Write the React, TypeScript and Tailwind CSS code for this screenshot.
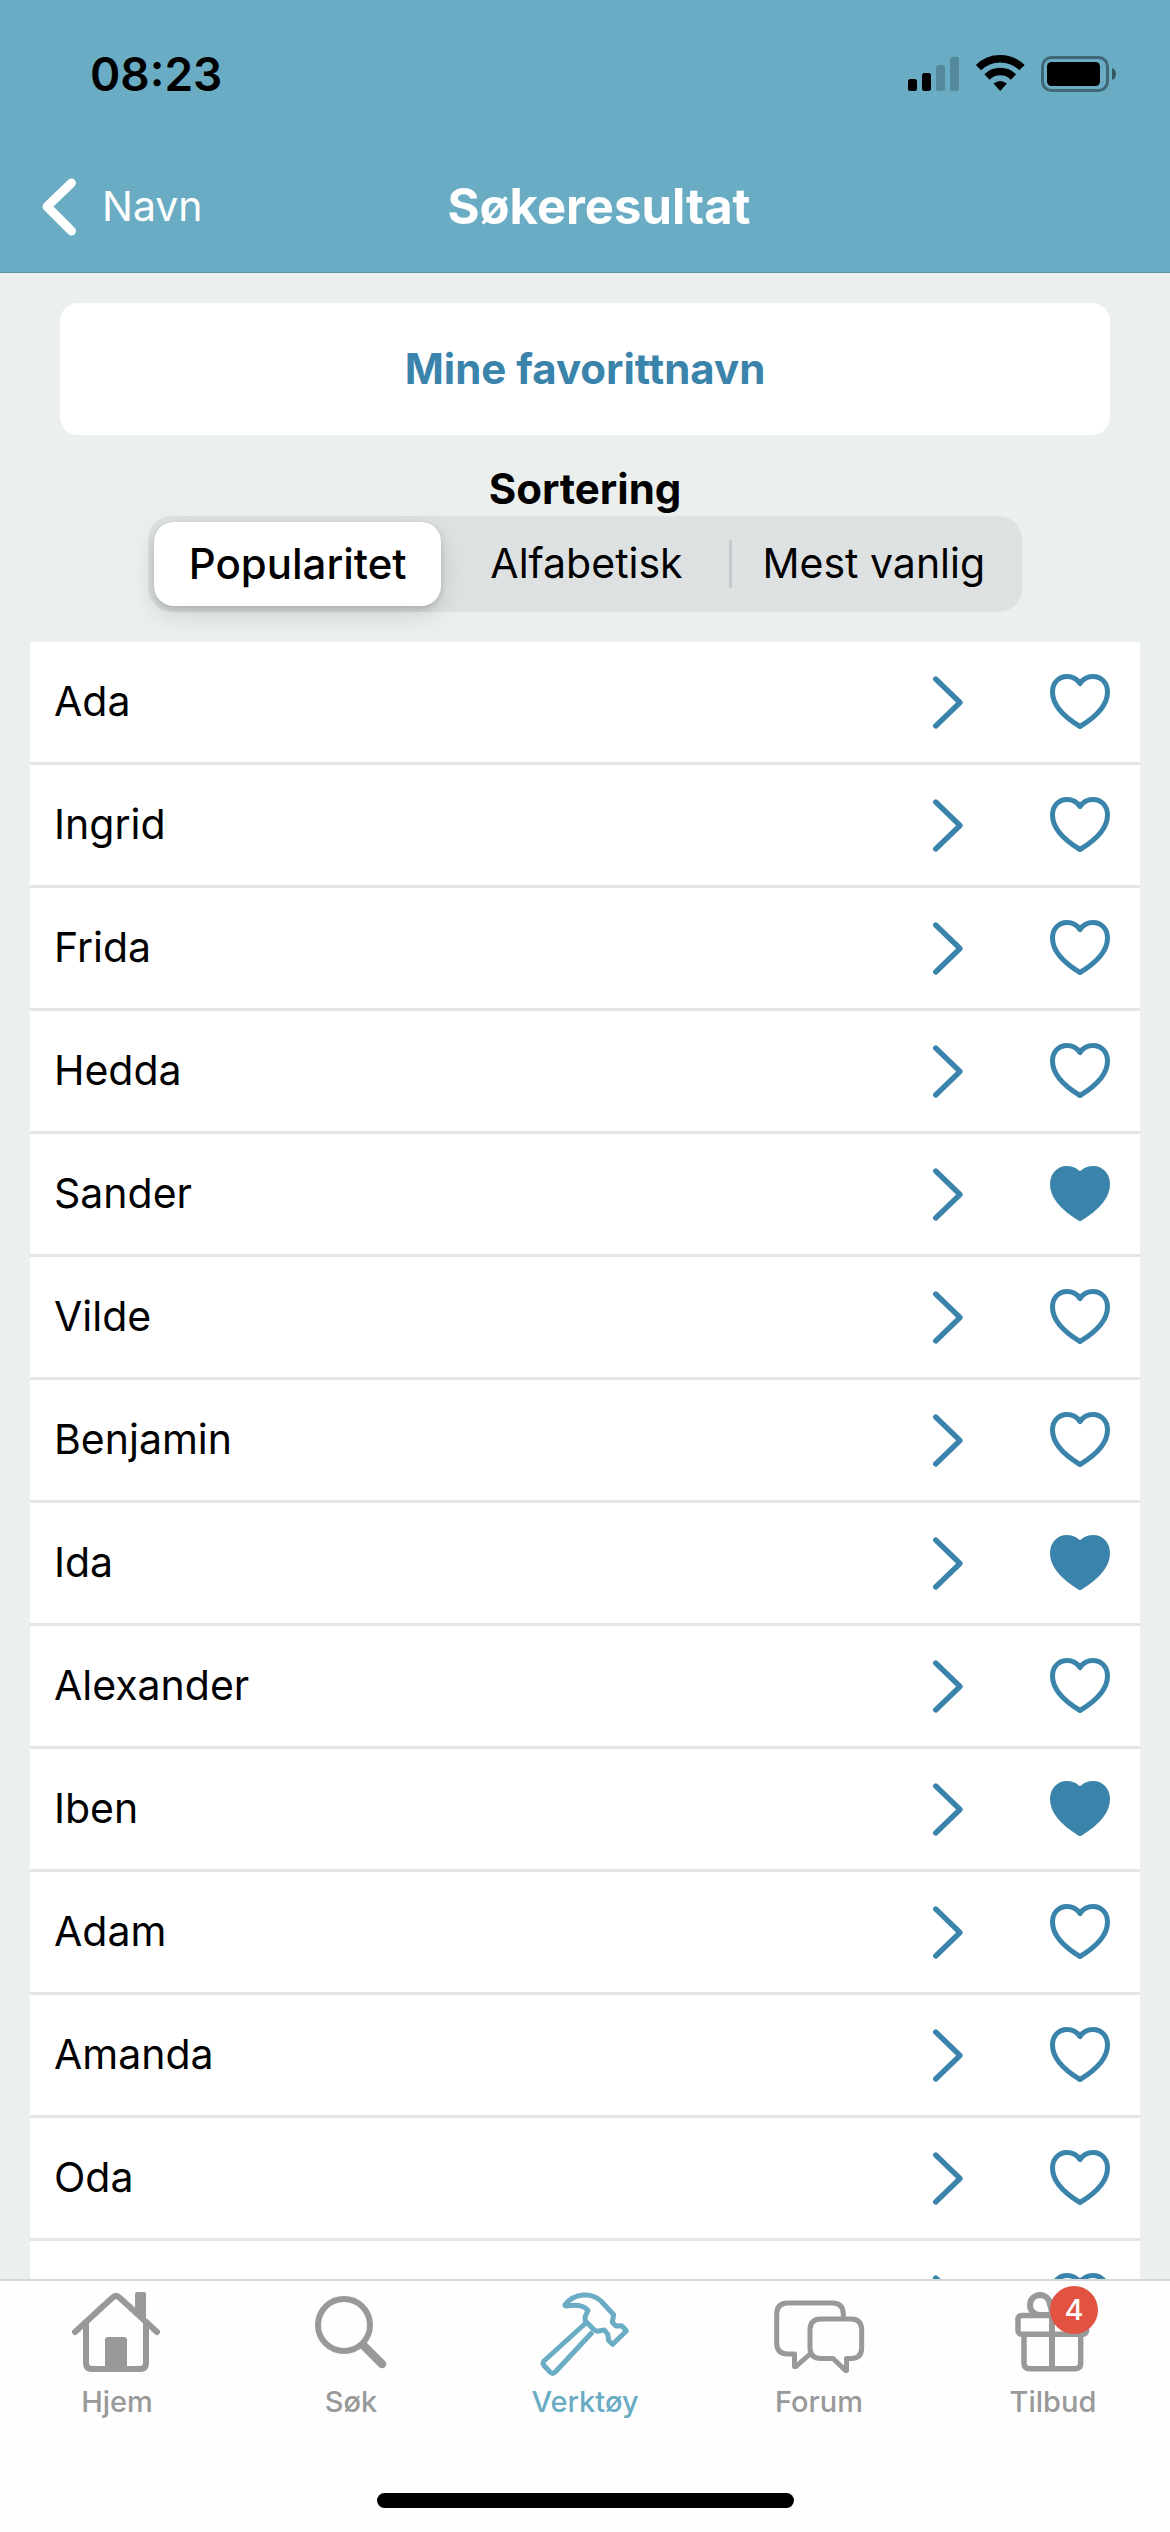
import { useState } from 'react';
import type { ReactNode } from 'react';
import clsx from 'clsx';

type NameEntry = {
  name: string;
  favorite: boolean;
};

type Tab = {
  label: string;
  icon: ReactNode;
  badge?: number;
};

const initialNames: NameEntry[] = [
  { name: 'Ada', favorite: false },
  { name: 'Ingrid', favorite: false },
  { name: 'Frida', favorite: false },
  { name: 'Hedda', favorite: false },
  { name: 'Sander', favorite: true },
  { name: 'Vilde', favorite: false },
  { name: 'Benjamin', favorite: false },
  { name: 'Ida', favorite: true },
  { name: 'Alexander', favorite: false },
  { name: 'Iben', favorite: true },
  { name: 'Adam', favorite: false },
  { name: 'Amanda', favorite: false },
  { name: 'Oda', favorite: false },
  { name: '', favorite: false },
];

const sortOptions = ['Popularitet', 'Alfabetisk', 'Mest vanlig'];

const HomeIcon = () => (
  <svg className="h-[90px] w-24" viewBox="0 0 96 90" fill="none" stroke="currentColor" strokeWidth="6">
    <path d="M6 45 43 11q4-4 8 0l37 34" strokeLinecap="round" />
    <path d="M17 34v42q0 6 6 6h48q6 0 6-6V34" />
    <path d="M66 27V7q0-2 2-2h7q2 0 2 2v27Z" fill="currentColor" stroke="none" />
    <path d="M36 82V53q0-3 3-3h16q3 0 3 3v29Z" fill="currentColor" stroke="none" />
  </svg>
);

const SearchIcon = () => (
  <svg className="h-[90px] w-24" viewBox="0 0 96 90" fill="none" stroke="currentColor">
    <circle cx="41" cy="38" r="26" strokeWidth="6" />
    <path d="m60 58 19 19" strokeWidth="8.5" strokeLinecap="round" />
  </svg>
);

const HammerIcon = () => (
  <svg
    className="h-[90px] w-24"
    viewBox="0 0 96 90"
    fill="none"
    stroke="currentColor"
    strokeWidth="5"
    strokeLinejoin="round">
    <path d="M28.3 17.3C38 6 54 5 64 14l12.7 13.7-1.4 7.6L79 39l5-.3q2 .5 5.3 5.3L75.7 57.3l-4-3.6-1-6.7-3.4-4-7 1.3-3-1.3-9-9-.3-4 3-6.7C46 17.5 38 17.5 29 19q-2-.5-.7-1.7Z" />
    <path d="M48.3 36.5 7.5 73.5q-2.5 2.5-.5 5l6 6.5q2.7 2.5 5.3 0L55.5 45" />
  </svg>
);

const ForumIcon = () => (
  <svg
    className="h-[90px] w-24"
    viewBox="0 0 96 90"
    fill="none"
    stroke="currentColor"
    strokeWidth="5"
    strokeLinejoin="round">
    <path d="M72.3 31v-4q0-11-11-11H17Q5.7 16 5.7 27v29q0 11 11 11h6.8v12.5h1.5L39 67" />
    <path d="M50 32h30q10.7 0 10.7 11v17.5q0 11-10.7 11h-4.5v12h-1L62 71.5H50q-11 0-11-11V43q0-11 11-11Z" />
  </svg>
);

const GiftIcon = () => (
  <svg className="h-[90px] w-24" viewBox="0 0 96 90" fill="none" stroke="currentColor" strokeWidth="5.5">
    <rect x="13" y="28.5" width="68.5" height="18.8" rx="3.5" />
    <path d="M19 47v29q0 5.7 5.7 5.7H70q5.7 0 5.7-5.7V47" />
    <path d="M47 28v54M47 28H35a10 10 0 1 1 10-10q2 4 2 10ZM47 28h12a10 10 0 1 0-10-10q-2 4-2 10Z" strokeWidth="6" />
  </svg>
);

const tabs: Tab[] = [
  { label: 'Hjem', icon: <HomeIcon /> },
  { label: 'Søk', icon: <SearchIcon /> },
  { label: 'Verktøy', icon: <HammerIcon /> },
  { label: 'Forum', icon: <ForumIcon /> },
  { label: 'Tilbud', icon: <GiftIcon />, badge: 4 },
];

const StatusBar = () => (
  <div className="flex h-[148px] items-center justify-between pr-[54px] pl-[90px]">
    <span className="text-[46px] font-semibold text-black">08:23</span>
    <svg className="h-10 w-[208px]" viewBox="0 0 208 40">
      <rect x="0" y="25" width="9" height="12" rx="2.5" />
      <rect x="14" y="19" width="9" height="18" rx="2.5" />
      <rect x="28" y="11" width="9" height="26" rx="2.5" opacity="0.2" />
      <rect x="42" y="3" width="9" height="34" rx="2.5" opacity="0.2" />
      <g fill="none" stroke="#000" strokeWidth="7.5">
        <path d="M70.5 13.7a31 31 0 0 1 43.5 0" />
        <path d="M79 23a19 19 0 0 1 26.5 0" />
      </g>
      <path d="M85.5 29.5q6.7-5 13.4 0L92.2 37Z" />
      <rect x="134.5" y="3.5" width="65" height="33" rx="9" fill="none" stroke="#000" strokeWidth="3" opacity="0.4" />
      <rect x="139" y="8" width="53" height="24" rx="4.5" />
      <path d="M204 14q4 1.5 4 6t-4 6Z" opacity="0.5" />
    </svg>
  </div>
);

const Header = () => (
  <header className="shrink-0 border-b border-[#5a93a7] bg-[#69acc3] text-white">
    <StatusBar />
    <div className="grid h-[124px] grid-cols-[1fr_auto_1fr] items-center pr-3.5 pb-1.5 pl-[42px]">
      <button className="flex items-center gap-[26px] text-[41px]">
        <svg className="h-[58px] w-[34px]" viewBox="0 0 34 58" fill="none" stroke="currentColor">
          <path d="M29.5 5 5 28.5 29.5 53" strokeWidth="9" strokeLinecap="round" strokeLinejoin="round" />
        </svg>
        Navn
      </button>
      <h1 className="text-[49px] font-bold">Søkeresultat</h1>
    </div>
  </header>
);

type SortControlProps = {
  value: string;
  onChange: (value: string) => void;
};

const SortControl = ({ value, onChange }: SortControlProps) => {
  const selected = sortOptions.indexOf(value);
  return (
    <div className="mx-[148px] flex h-24 rounded-3xl bg-[#dde1e2] p-1.5">
      {sortOptions.map((option, i) => (
        <div key={option} className="flex flex-1 basis-0 items-center">
          {i > 0 && <span className={clsx('h-12 w-[3px] rounded-full', i - 1 !== selected && i !== selected && 'bg-[#c4c8ca]')} />}
          <button
            aria-pressed={i === selected}
            onClick={() => onChange(option)}
            className={clsx(
              'h-full flex-1 rounded-[20px] whitespace-nowrap text-black',
              i === selected
                ? 'bg-white pb-0.5 text-[42px] font-medium shadow-[0_9px_24px_rgba(0,0,0,0.12),0_3px_6px_rgba(0,0,0,0.14)]'
                : 'text-[41px]'
            )}>
            {option}
          </button>
        </div>
      ))}
    </div>
  );
};

type NameRowProps = {
  entry: NameEntry;
  onToggle: () => void;
};

const NameRow = ({ entry, onToggle }: NameRowProps) => (
  <li className="flex h-[123px] items-center border-b-3 border-[#e4e4e9] pr-[30px] text-[#3a83ab]">
    <button className="flex h-full flex-1 items-center justify-between pr-[87px] pl-6">
      <span className="text-[41px] text-black">{entry.name}</span>
      <svg className="h-[53px] w-[30px]" viewBox="0 0 30 53" fill="none" stroke="currentColor">
        <path d="M2.7 3 27 26.5 2.7 50" strokeWidth="5.3" strokeLinecap="round" strokeLinejoin="round" />
      </svg>
    </button>
    <button aria-label="Favoritt" aria-pressed={entry.favorite} onClick={onToggle}>
      <svg
        className="h-14 w-[60px]"
        viewBox="0 0 60 56"
        fill={entry.favorite ? 'currentColor' : 'none'}
        stroke="currentColor"
        strokeWidth="5"
        strokeLinejoin="round">
        <path d="M30 9.5C27 5 22.5 2.5 17 2.5 8.5 2.5 2.5 9 2.5 18 2.5 32 15 43.5 30 52.5 45 43.5 57.5 32 57.5 18 57.5 9 51.5 2.5 43 2.5 37.5 2.5 33 5 30 9.5Z" />
      </svg>
    </button>
  </li>
);

const TabBar = () => (
  <nav className="shrink-0 border-t-2 border-[#d5d7d7] bg-[#fefefe] pt-1.5 pb-6">
    <div className="grid grid-cols-5">
      {tabs.map((tab) => (
        <button
          key={tab.label}
          className={clsx(
            'flex flex-col items-center gap-[7px] text-[29px] leading-9 font-medium',
            tab.label === 'Verktøy' ? 'text-[#69acc3]' : 'text-[#999999]'
          )}>
          <span className="relative">
            {tab.icon}
            {tab.badge && (
              <span className="absolute -top-px left-[45px] flex size-12 items-center justify-center rounded-full bg-[#e15241] text-white">
                {tab.badge}
              </span>
            )}
          </span>
          {tab.label}
        </button>
      ))}
    </div>
    <div className="mx-auto mt-[73px] h-[15px] w-[417px] rounded-full bg-black" />
  </nav>
);

const App = () => {
  const [names, setNames] = useState(initialNames);
  const [sort, setSort] = useState('Popularitet');

  const toggleFavorite = (index: number) => {
    setNames(names.map((entry, i) => (i === index ? { ...entry, favorite: !entry.favorite } : entry)));
  };

  return (
    <div className="flex h-screen flex-col bg-[#ebefee] font-['Inter','Liberation_Sans',sans-serif]">
      <Header />
      <main className="flex min-h-0 flex-1 flex-col pt-[30px]">
        <button className="mx-[60px] h-[132px] shrink-0 rounded-[18px] bg-white pb-0.5 text-[42px] font-bold text-[#3a83ab]">
          Mine favorittnavn
        </button>
        <h2 className="mt-7 mb-px text-center text-[42px] leading-[52px] font-bold text-black">Sortering</h2>
        <SortControl value={sort} onChange={setSort} />
        <ul className="mx-[30px] mt-[30px] min-h-0 flex-1 overflow-y-auto bg-white [scrollbar-width:none]">
          {names.map((entry, i) => (
            <NameRow key={i} entry={entry} onToggle={() => toggleFavorite(i)} />
          ))}
        </ul>
      </main>
      <TabBar />
    </div>
  );
};

export default App;
